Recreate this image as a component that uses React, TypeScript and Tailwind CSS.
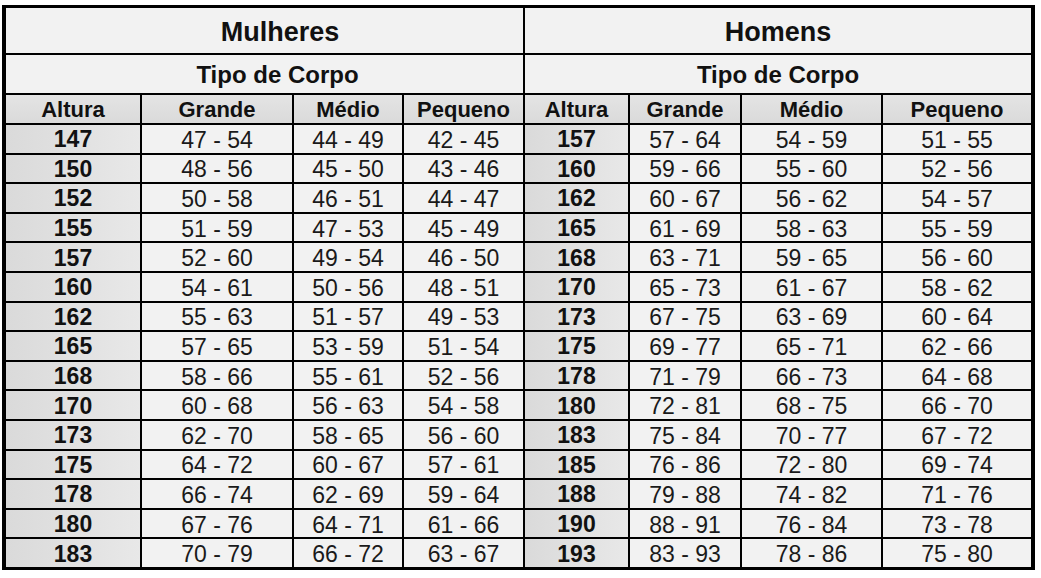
import React from "react";

const women: [string, string, string, string][] = [
  ["147", "47 - 54", "44 - 49", "42 - 45"],
  ["150", "48 - 56", "45 - 50", "43 - 46"],
  ["152", "50 - 58", "46 - 51", "44 - 47"],
  ["155", "51 - 59", "47 - 53", "45 - 49"],
  ["157", "52 - 60", "49 - 54", "46 - 50"],
  ["160", "54 - 61", "50 - 56", "48 - 51"],
  ["162", "55 - 63", "51 - 57", "49 - 53"],
  ["165", "57 - 65", "53 - 59", "51 - 54"],
  ["168", "58 - 66", "55 - 61", "52 - 56"],
  ["170", "60 - 68", "56 - 63", "54 - 58"],
  ["173", "62 - 70", "58 - 65", "56 - 60"],
  ["175", "64 - 72", "60 - 67", "57 - 61"],
  ["178", "66 - 74", "62 - 69", "59 - 64"],
  ["180", "67 - 76", "64 - 71", "61 - 66"],
  ["183", "70 - 79", "66 - 72", "63 - 67"],
];

const men: [string, string, string, string][] = [
  ["157", "57 - 64", "54 - 59", "51 - 55"],
  ["160", "59 - 66", "55 - 60", "52 - 56"],
  ["162", "60 - 67", "56 - 62", "54 - 57"],
  ["165", "61 - 69", "58 - 63", "55 - 59"],
  ["168", "63 - 71", "59 - 65", "56 - 60"],
  ["170", "65 - 73", "61 - 67", "58 - 62"],
  ["173", "67 - 75", "63 - 69", "60 - 64"],
  ["175", "69 - 77", "65 - 71", "62 - 66"],
  ["178", "71 - 79", "66 - 73", "64 - 68"],
  ["180", "72 - 81", "68 - 75", "66 - 70"],
  ["183", "75 - 84", "70 - 77", "67 - 72"],
  ["185", "76 - 86", "72 - 80", "69 - 74"],
  ["188", "79 - 88", "74 - 82", "71 - 76"],
  ["190", "88 - 91", "76 - 84", "73 - 78"],
  ["193", "83 - 93", "78 - 86", "75 - 80"],
];

const headers = ["Altura", "Grande", "Médio", "Pequeno"];

function AlturaCell({ v }: { v: string }) {
  return (
    <div className="flex items-center justify-center pt-[2px] bg-gradient-to-r from-[#dadada] to-[#e8e8e8] font-bold text-[23px] leading-none text-[#111]">
      {v}
    </div>
  );
}

function DataCell({ v }: { v: string }) {
  return (
    <div className="flex items-center justify-center pt-[3px] bg-[#f2f2f2] text-[23px] leading-none text-[#1a1a1a]">
      {v}
    </div>
  );
}

export default function App() {
  return (
    <div className="w-[1041px] h-[578px] bg-white pt-[5px] pl-[2px]" style={{ fontFamily: '"Liberation Sans", Arial, sans-serif' }}>
      <div className="w-[1033px] h-[565px] border-black border-x-[4px] border-y-[3px] bg-black grid gap-[2px] grid-cols-[134px_150px_108px_119px_103px_110px_139px_148px] grid-rows-[45px_38px_28px_repeat(15,1fr)]">
        <div className="col-span-4 flex items-center justify-center pl-[31px] pt-[3px] bg-[#f2f2f2] font-bold text-[27px] leading-none text-[#111]">
          Mulheres
        </div>
        <div className="col-span-4 flex items-center justify-center pt-[3px] bg-[#f2f2f2] font-bold text-[27px] leading-none text-[#111]">
          Homens
        </div>
        <div className="col-span-4 flex items-center justify-center pl-[26px] pt-[2px] bg-[#f2f2f2] font-bold text-[24px] leading-none text-[#111]">
          Tipo de Corpo
        </div>
        <div className="col-span-4 flex items-center justify-center pt-[2px] bg-[#f2f2f2] font-bold text-[24px] leading-none text-[#111]">
          Tipo de Corpo
        </div>
        {[...headers, ...headers].map((h, i) => (
          <div
            key={`h${i}`}
            className="flex items-center justify-center pt-[2px] bg-gradient-to-b from-[#e4e4e4] to-[#dadada] font-bold text-[22px] leading-none text-[#111]"
          >
            {h}
          </div>
        ))}
        {women.map((w, r) => {
          const m = men[r];
          return (
            <React.Fragment key={`r${r}`}>
              <AlturaCell v={w[0]} />
              <DataCell v={w[1]} />
              <DataCell v={w[2]} />
              <DataCell v={w[3]} />
              <AlturaCell v={m[0]} />
              <DataCell v={m[1]} />
              <DataCell v={m[2]} />
              <DataCell v={m[3]} />
            </React.Fragment>
          );
        })}
      </div>
    </div>
  );
}
